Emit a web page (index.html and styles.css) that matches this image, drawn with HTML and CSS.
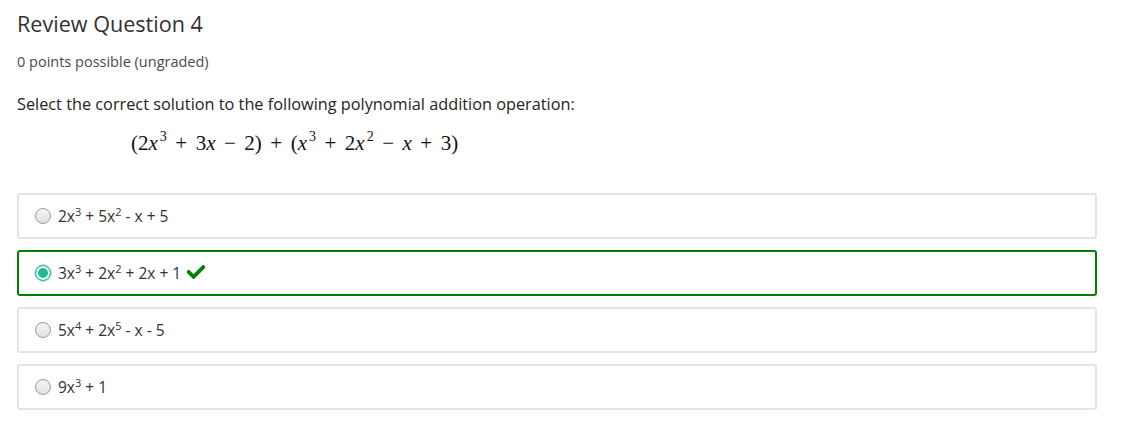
FILE: index.html
```html
<!DOCTYPE html>
<html>
<head>
<meta charset="utf-8">
<link rel="stylesheet" href="styles.css">
</head>
<body>
<div class="problem">
  <h3 class="title">Review Question 4</h3>
  <div class="points">0 points possible (ungraded)</div>
  <p class="prompt">Select the correct solution to the following polynomial addition operation:</p>
  <div class="math"><span class="paren">(</span>2<i>x</i><sup>3</sup><span class="op">+</span>3<i>x</i><span class="op">−</span>2<span class="paren">)</span><span class="op">+</span><span class="paren">(</span><i>x</i><sup>3</sup><span class="op">+</span>2<i>x</i><sup>2</sup><span class="op">−</span><i>x</i><span class="op">+</span>3<span class="paren">)</span></div>
  <div class="choices">
    <label class="choice">
      <span class="radio"></span>
      <span class="ctext">2x<sup>3</sup> + 5x<sup>2</sup> - x + 5</span>
    </label>
    <label class="choice correct">
      <span class="radio checked"></span>
      <span class="ctext">3x<sup>3</sup> + 2x<sup>2</sup> + 2x + 1</span>
      <svg class="check" width="18" height="14" viewBox="0 0 18 14"><path d="M1.8 7.2 L6.6 11.8 L16.2 2.2" fill="none" stroke="#008100" stroke-width="3.8" stroke-linecap="square" stroke-linejoin="miter"/></svg>
    </label>
    <label class="choice">
      <span class="radio"></span>
      <span class="ctext">5x<sup>4</sup> + 2x<sup>5</sup> - x - 5</span>
    </label>
    <label class="choice">
      <span class="radio"></span>
      <span class="ctext">9x<sup>3</sup> + 1</span>
    </label>
  </div>
</div>
</body>
</html>
```
FILE: styles.css
```css
html, body {
  margin: 0;
  padding: 0;
  background: #fff;
}
body {
  font-family: "Open Sans", "Liberation Sans", sans-serif;
  color: #313131;
}
.problem {
  padding: 9px 44px 0 17px;
}
.title {
  margin: 0;
  font-size: 21.6px;
  font-weight: 400;
  line-height: 30px;
  color: #313131;
}
.points {
  margin-top: 13px;
  font-size: 14.5px;
  line-height: 20px;
  color: #4a4a4a;
}
.prompt {
  margin: 20px 0 0;
  font-size: 16.3px;
  line-height: 24px;
  color: #232323;
}
.math {
  margin: 12px 0 0 114px;
  font-family: "Liberation Serif", "DejaVu Serif", serif;
  font-size: 21px;
  line-height: 30px;
  color: #111;
  white-space: nowrap;
}
.math i {
  font-style: italic;
}
.math sup {
  font-size: 14px;
  vertical-align: 9px;
  line-height: 0;
  margin-left: 2px;
}
.math .op {
  padding: 0 8.5px;
}
.choices {
  margin-top: 35px;
  display: flex;
  flex-direction: column;
  gap: 11px;
}
.choice {
  display: flex;
  align-items: center;
  height: 42px;
  border: 2px solid #e4e4e4;
  border-radius: 3px;
  padding-left: 16px;
  font-size: 15.5px;
  color: #313131;
}
.choice.correct {
  border-color: #008100;
}
.radio {
  width: 14px;
  height: 14px;
  border-radius: 50%;
  border: 1px solid #9a9a9a;
  background: linear-gradient(#f4f4f4, #e2e2e2);
  margin-right: 7px;
  flex: none;
}
.radio.checked {
  border: 1px solid #1fb89a;
  background: #1fb89a;
  box-shadow: inset 0 0 0 2px #fff;
  outline: 1px solid rgba(31, 184, 154, 0.35);
  outline-offset: 0;
}
.ctext sup {
  font-size: 11px;
  line-height: 0;
  vertical-align: 6px;
}
.check {
  margin-left: 6px;
  margin-top: -2px;
}
```
